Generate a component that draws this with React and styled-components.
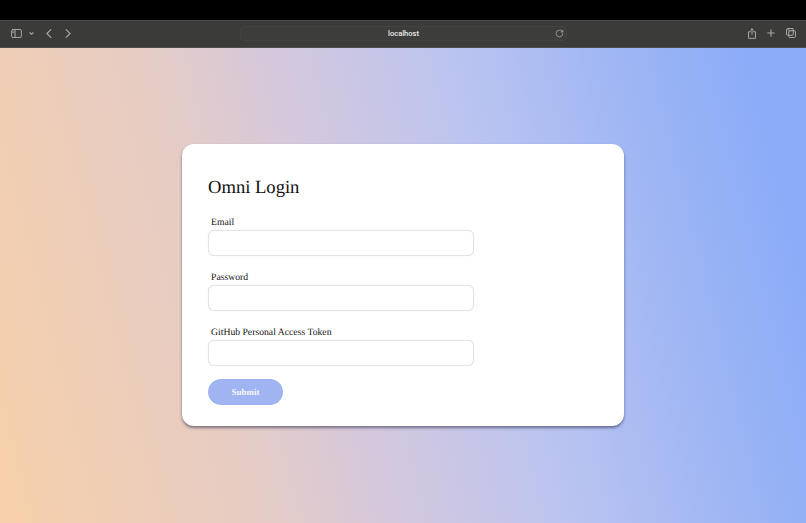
import React from 'react';
import styled, { createGlobalStyle } from 'styled-components';
import { RotateCw } from 'lucide-react';

const GlobalStyle = createGlobalStyle`
  html, body {
    margin: 0;
    padding: 0;
    height: 100%;
    overflow: hidden;
  }
  #root {
    height: 100%;
  }
`;

const Screen = styled.div`
  width: 806px;
  height: 523px;
  display: flex;
  flex-direction: column;
  background: #000;
`;

const MenuStrip = styled.div`
  height: 20px;
  background: #000;
`;

const Toolbar = styled.header`
  height: 28px;
  box-sizing: border-box;
  display: flex;
  align-items: center;
  justify-content: space-between;
  padding: 0 10px 2px;
  background: #3b3b3a;
  border-top: 1px solid #4a4a49;
  border-bottom: 1px solid #4f4f50;
  position: relative;
`;

const ToolGroup = styled.div`
  display: flex;
  align-items: center;
  gap: ${props => props.$gap || 0}px;
`;

const ToolIcon = styled.svg`
  display: block;
  flex: none;
  margin-left: ${props => props.$left || 0}px;
  fill: none;
  stroke: #a8a8a6;
  stroke-width: 1.1;
  stroke-linecap: round;
  stroke-linejoin: round;
`;

const AddressBar = styled.div`
  position: absolute;
  left: 240px;
  top: 5px;
  width: 327px;
  height: 15px;
  box-sizing: border-box;
  display: flex;
  align-items: center;
  justify-content: center;
  border-radius: 4px;
  background: #3d3d3c;
  border: 1px solid #444443;
  color: #ecece9;
  font-family: Roboto, "Liberation Sans", Arial, sans-serif;
  font-weight: 500;
  font-size: 7.5px;
`;

const ReloadSlot = styled.span`
  position: absolute;
  right: 2px;
  top: 2px;
  display: flex;
  color: #c4c4c2;
`;

const Backdrop = styled.main`
  flex: 1;
  display: flex;
  align-items: flex-start;
  justify-content: center;
  padding-top: 96px;
  background: linear-gradient(
    76deg,
    #f7d0a9 0%,
    #e6ccc4 28%,
    #d5c8dc 42%,
    #bbc4f0 61.5%,
    #9cb5f4 81%,
    #8aacf8 94%,
    #8aacf8 100%
  );
`;

const Card = styled.form`
  width: 442px;
  height: 282px;
  box-sizing: border-box;
  padding: 31px 26px 0;
  background: #fff;
  border-radius: 12px;
  box-shadow: 0 2px 3px rgba(40, 40, 70, 0.55);
  font-family: "Liberation Serif", "Times New Roman", serif;
  color: #111;
  text-rendering: geometricPrecision;
`;

const Title = styled.h1`
  margin: 0 0 15px;
  font-weight: 400;
  font-size: 18.6px;
  line-height: 26px;
`;

const Field = styled.div`
  display: flex;
  flex-direction: column;
  margin-bottom: 15px;
`;

const FieldLabel = styled.label`
  padding-left: 3px;
  margin-bottom: 1px;
  font-size: 9.7px;
  line-height: 13px;
`;

const TextInput = styled.input`
  width: 266px;
  height: 26px;
  box-sizing: border-box;
  border: 1px solid #e4e4e6;
  border-radius: 6px;
  background: #fff;
  box-shadow: 0 0 1px rgba(0, 0, 0, 0.15);
  outline: none;
`;

const SubmitButton = styled.button`
  display: block;
  width: 75px;
  height: 26px;
  margin-top: -2px;
  padding: 0;
  border: none;
  border-radius: 13px;
  background: #a0b4f2;
  color: #f4f6fe;
  font-family: "Liberation Serif", "Times New Roman", serif;
  font-weight: 700;
  font-size: 9px;
  text-rendering: geometricPrecision;
`;

const fields = [
  { id: 'email', label: 'Email', type: 'email' },
  { id: 'password', label: 'Password', type: 'password' },
  { id: 'token', label: 'GitHub Personal Access Token', type: 'text' },
];

const App = () => (
  <Screen>
    <GlobalStyle />
    <MenuStrip />
    <Toolbar>
      <ToolGroup>
        <ToolIcon width="11" height="9" viewBox="0 0 12 10" $left={1}>
          <rect x="0.6" y="0.6" width="10.8" height="8.8" rx="1.4" />
          <path d="M4.4 0.8V9.2" />
          <path d="M1.6 2.4H3.2M1.6 4H3.2" strokeWidth="0.8" />
        </ToolIcon>
        <ToolIcon width="5" height="3" viewBox="0 0 6 4" $left={7}>
          <path d="M1 1L3 3L5 1" strokeWidth="1.5" />
        </ToolIcon>
        <ToolIcon width="6" height="9" viewBox="0 0 7 11" $left={12}>
          <path d="M5.8 0.8L1 5.5L5.8 10.2" strokeWidth="1.4" />
        </ToolIcon>
        <ToolIcon width="6" height="9" viewBox="0 0 7 11" $left={13}>
          <path d="M1.2 0.8L6 5.5L1.2 10.2" strokeWidth="1.4" />
        </ToolIcon>
      </ToolGroup>
      <AddressBar>
        localhost
        <ReloadSlot>
          <RotateCw size={9} strokeWidth={1.6} />
        </ReloadSlot>
      </AddressBar>
      <ToolGroup $gap={11}>
        <ToolIcon width="8" height="11" viewBox="0 0 9 12">
          <path d="M2.6 4H0.6V11.4H8.4V4H6.4" />
          <path d="M4.5 7V0.8M2.8 2.4L4.5 0.7L6.2 2.4" />
        </ToolIcon>
        <ToolIcon width="8" height="8" viewBox="0 0 9 9">
          <path d="M4.5 0.8V8.2M0.8 4.5H8.2" strokeWidth="1.2" />
        </ToolIcon>
        <ToolIcon width="10" height="10" viewBox="0 0 11 11">
          <path d="M2.4 2.4V1.6C2.4 1 2.9 0.6 3.4 0.6H7.6" />
          <rect x="0.6" y="0.6" width="7.4" height="7.4" rx="1.2" />
          <rect x="3" y="3" width="7.4" height="7.4" rx="1.2" />
        </ToolIcon>
      </ToolGroup>
    </Toolbar>
    <Backdrop>
      <Card onSubmit={e => e.preventDefault()}>
        <Title>Omni Login</Title>
        {fields.map(f => (
          <Field key={f.id}>
            <FieldLabel htmlFor={f.id}>{f.label}</FieldLabel>
            <TextInput id={f.id} type={f.type} />
          </Field>
        ))}
        <SubmitButton type="submit">Submit</SubmitButton>
      </Card>
    </Backdrop>
  </Screen>
);

export default App;
